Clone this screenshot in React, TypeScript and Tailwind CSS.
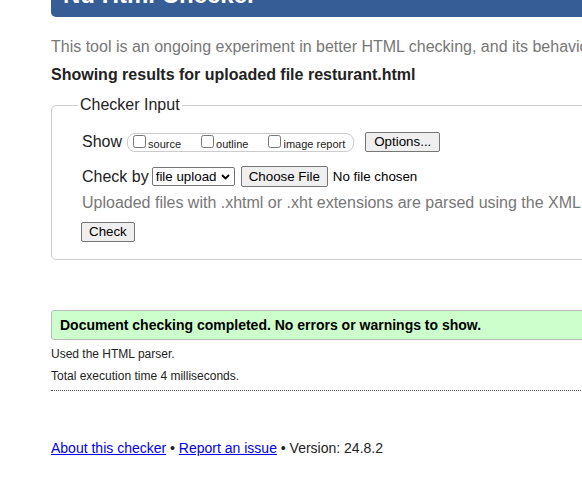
const ShowOption = ({ label }: { label: string }) => (
  <label className="flex items-start gap-[2px]">
    <input type="checkbox" className="m-0 h-[13px] w-[13px]" />
    <span className="pt-[3px] text-[11px] leading-[13px]">{label}</span>
  </label>
);

const NativeButton = ({ children, wide }: { children: React.ReactNode; wide?: boolean }) => (
  <button
    className={
      wide
        ? "h-[20px] rounded-[2px] border border-[#767676] bg-[#efefef] px-[8px] text-[13.33px] leading-[16px] text-black"
        : "h-[20px] rounded-[2px] border border-[#767676] bg-[#efefef] px-[7px] text-[13.33px] leading-[16px] text-black"
    }
  >
    {children}
  </button>
);

const App = () => {
  return (
    <div className="h-[493px] w-[582px] overflow-hidden bg-white font-['Liberation_Sans',Arial,sans-serif] text-[#222]">
      <main className="ml-[51px] w-[900px]">
        {/* Title bar, scrolled mostly out of view */}
        <h1 className="-mt-[40px] h-[57px] rounded-b-[5px] bg-[#365d95] pl-[12px] pt-[23px] text-[24px] font-bold leading-[24px] text-white">
          Nu Html Checker
        </h1>

        <p className="mt-[21px] text-[16px] leading-[18px] text-[#777]">
          This tool is an ongoing experiment in better HTML checking, and its behavior remains subject to change
        </p>
        <p className="mt-[10px] text-[16px] font-bold leading-[18px]">
          Showing results for uploaded file resturant.html
        </p>

        {/* Checker input */}
        <fieldset className="mt-[12px] rounded-[5px] border border-[#ccc] pb-[17px] pl-[30px]">
          <legend className="-ml-[4px] px-[2px] text-[16px] leading-[18px]">Checker Input</legend>

          <div className="mt-[18px] flex h-[20px] items-center">
            <span className="text-[16px] leading-[18px]">Show</span>
            <div className="ml-[5px] flex h-[19px] items-start gap-[20px] rounded-[8px] border border-[#ccc] pl-[5px] pr-[8px] pt-[1px]">
              <ShowOption label="source" />
              <ShowOption label="outline" />
              <ShowOption label="image report" />
            </div>
            <div className="ml-[11px] flex">
              <NativeButton wide>Options...</NativeButton>
            </div>
          </div>

          <div className="mt-[14px] flex h-[21px] items-center">
            <span className="text-[16px] leading-[18px]">Check by</span>
            <div className="ml-[3px] flex h-[19px] w-[83px] items-center justify-between rounded-[2px] border border-[#767676] bg-white pl-[3px] pr-[4px] text-[13.33px] leading-[16px] text-black">
              <span>file upload</span>
              <svg width="9" height="6" viewBox="0 0 9 6" fill="none">
                <path d="M1 1l3.5 3.5L8 1" stroke="#000" strokeWidth="1.8" />
              </svg>
            </div>
            <div className="ml-[6px] flex items-center">
              <button className="h-[21px] rounded-[2px] border border-[#767676] bg-[#efefef] px-[7px] text-[13.33px] leading-[16px] text-black">
                Choose File
              </button>
              <span className="ml-[5px] text-[13.33px] leading-[16px] text-black">No file chosen</span>
            </div>
          </div>

          <p className="mt-[7px] whitespace-nowrap text-[16px] leading-[18px] text-[#777]">
            Uploaded files with .xhtml or .xht extensions are parsed using the XML parser.
          </p>

          <div className="mt-[10px] -ml-px flex">
            <NativeButton>Check</NativeButton>
          </div>
        </fieldset>

        {/* Results */}
        <div className="mt-[50px] h-[30px] rounded-[3px] border border-[#bbb] bg-[#ccffcc] pl-[8px] text-[14px] font-bold leading-[28px] text-black">
          Document checking completed. No errors or warnings to show.
        </div>
        <p className="mt-[7px] text-[12px] leading-[14px]">Used the HTML parser.</p>
        <p className="mt-[8px] text-[12px] leading-[14px]">Total execution time 4 milliseconds.</p>
        <hr className="mt-[7px] border-0 border-b border-dotted border-[#555]" />

        <p className="mt-[49px] text-[14px] leading-[16px] text-[#222]">
          <a href="#" className="text-[#0000ee] underline">About this checker</a>
          {" • "}
          <a href="#" className="text-[#0000ee] underline">Report an issue</a>
          {" • Version: 24.8.2"}
        </p>
      </main>
    </div>
  );
};

export default App;
